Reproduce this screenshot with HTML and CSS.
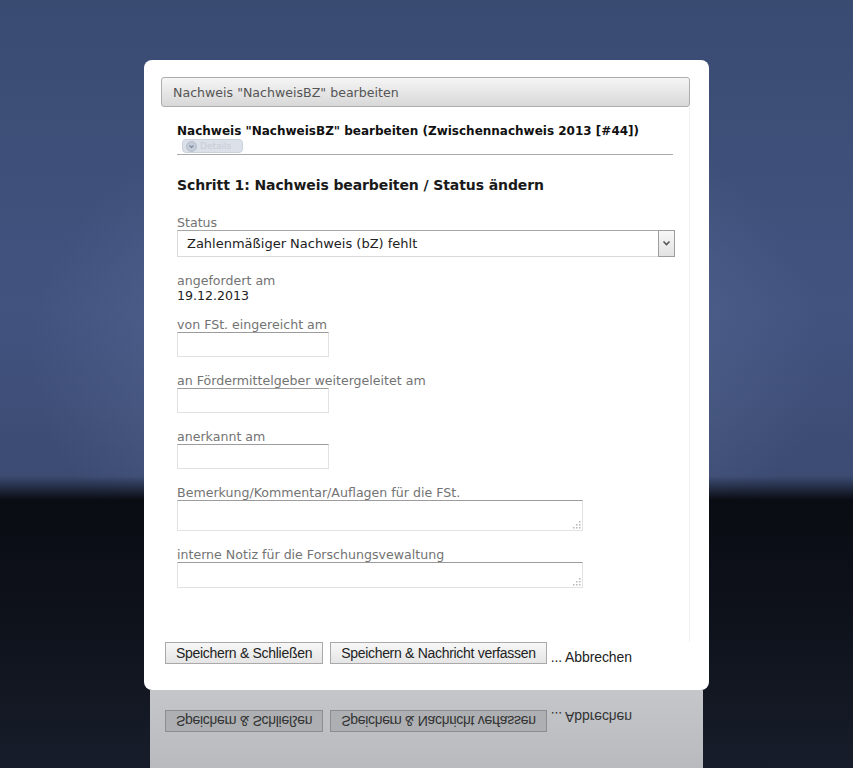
FILE: index.html
```html
<!DOCTYPE html>
<html lang="de">
<head>
  <meta charset="UTF-8" />
  <title>Nachweis bearbeiten</title>
  <meta name="viewport" content="width=device-width, initial-scale=1.0" />
  <link rel="stylesheet" href="styles.css">
</head>
<body>
  <div class="stage">
    <div class="dialog">
      <div class="bar">Nachweis "NachweisBZ" bearbeiten</div>

      <div class="panel">
        <h1>Nachweis "NachweisBZ" bearbeiten (Zwischennachweis 2013 [#44])</h1>
        <span class="details">
          <svg width="11" height="11" viewBox="0 0 11 11"><circle cx="5.5" cy="5.5" r="5" fill="#c4ccd8" stroke="#b4bdcb"/><path d="M3.5 4.5 L5.5 6.5 L7.5 4.5" fill="none" stroke="#7d8aa0" stroke-width="1.2"/></svg>
          Details
        </span>
        <hr />

        <h2>Schritt 1: Nachweis bearbeiten / Status ändern</h2>

        <div class="field first">
          <label>Status</label>
          <div class="select">
            <span>Zahlenmäßiger Nachweis (bZ) fehlt</span>
            <span class="arrow">
              <svg width="9" height="7" viewBox="0 0 9 7"><path d="M1.5 1.5 L4.5 4.5 L7.5 1.5" fill="none" stroke="#555" stroke-width="1.6"/></svg>
            </span>
          </div>
        </div>

        <div class="field">
          <label>angefordert am</label>
          <div class="value">19.12.2013</div>
        </div>

        <div class="field tight">
          <label>von FSt. eingereicht am</label>
          <input type="text" class="date" />
        </div>

        <div class="field">
          <label>an Fördermittelgeber weitergeleitet am</label>
          <input type="text" class="date" />
        </div>

        <div class="field">
          <label>anerkannt am</label>
          <input type="text" class="date" />
        </div>

        <div class="field">
          <label>Bemerkung/Kommentar/Auflagen für die FSt.</label>
          <div class="area">
            <textarea class="tall"></textarea>
            <svg class="grip" width="9" height="9" viewBox="0 0 9 9" fill="#b8b8b8"><rect x="7" y="1" width="1.5" height="1.5"/><rect x="4" y="4" width="1.5" height="1.5"/><rect x="7" y="4" width="1.5" height="1.5"/><rect x="1" y="7" width="1.5" height="1.5"/><rect x="4" y="7" width="1.5" height="1.5"/><rect x="7" y="7" width="1.5" height="1.5"/></svg>
          </div>
        </div>

        <div class="field">
          <label>interne Notiz für die Forschungsvewaltung</label>
          <div class="area">
            <textarea></textarea>
            <svg class="grip" width="9" height="9" viewBox="0 0 9 9" fill="#b8b8b8"><rect x="7" y="1" width="1.5" height="1.5"/><rect x="4" y="4" width="1.5" height="1.5"/><rect x="7" y="4" width="1.5" height="1.5"/><rect x="1" y="7" width="1.5" height="1.5"/><rect x="4" y="7" width="1.5" height="1.5"/><rect x="7" y="7" width="1.5" height="1.5"/></svg>
          </div>
        </div>
      </div>

      <div class="actions">
        <button>Speichern &amp; Schließen</button>
        <button>Speichern &amp; Nachricht verfassen</button>
        <a class="cancel">... Abbrechen</a>
      </div>
    </div>

    <div class="reflection">
      <div class="actions flipped">
        <button>Speichern &amp; Schließen</button>
        <button>Speichern &amp; Nachricht verfassen</button>
        <a class="cancel">... Abbrechen</a>
      </div>
    </div>
  </div>
</body>
</html>
```

FILE: styles.css
```css
html, body {
  margin: 0;
  height: 100%;
}
body {
  min-height: 768px;
  overflow: hidden;
  font-family: "DejaVu Sans", Verdana, sans-serif;
  background:
    linear-gradient(180deg, rgba(8,10,16,0) 476px, #0a0c13 500px, #0e121b 620px, #171d2a 768px),
    radial-gradient(ellipse 62% 48% at 50% 46%, rgba(118,136,178,0.55), rgba(118,136,178,0) 75%),
    linear-gradient(180deg, #3a4b72 0, #425380 40%, #3b4b72 62%);
}
.stage {
  width: 565px;
  margin: 0 auto;
  padding-top: 60px;
}
.dialog {
  background: #fff;
  border-radius: 8px;
  height: 630px;
  box-sizing: border-box;
  padding: 17px 19px 0 17px;
  display: flex;
  flex-direction: column;
}
.bar {
  height: 30px;
  box-sizing: border-box;
  border: 1px solid #adadad;
  border-radius: 3px;
  background: linear-gradient(#f5f5f5, #d8d8d8);
  color: #555;
  font-size: 12.6px;
  line-height: 30px;
  padding-left: 11px;
}
.panel {
  flex: 1;
  border-right: 1px solid #f0f0f0;
  padding: 16px 14px 0 16px;
}
h1 {
  margin: 0;
  font-size: 12px;
  line-height: 16px;
  color: #111;
}
.details {
  display: flex;
  align-items: center;
  gap: 3px;
  width: 61px;
  height: 14px;
  box-sizing: border-box;
  margin-left: 5px;
  padding-left: 3px;
  border: 1px solid #ccd2dc;
  border-radius: 4px;
  background: #dce1e9;
  color: #c6ccd6;
  font-size: 9px;
}
hr {
  width: 496px;
  margin: 1px 0 0;
  border: 0;
  border-top: 1px solid #a9a9a9;
}
h2 {
  margin: 21px 0 0;
  font-size: 14px;
  letter-spacing: -0.1px;
  line-height: 18px;
  color: #1a1a1a;
}
.field {
  margin-top: 17px;
}
.field.first {
  margin-top: 22px;
}
.field.tight {
  margin-top: 15px;
}
label {
  display: block;
  font-size: 12.6px;
  line-height: 14px;
  color: #737373;
}
.value {
  font-size: 12.6px;
  line-height: 15px;
  color: #222;
}
.select {
  position: relative;
  height: 27px;
  box-sizing: border-box;
  border: 1px solid #dadada;
  border-top-color: #a6a6a6;
  padding-left: 9px;
  font-size: 13px;
  line-height: 25px;
  color: #222;
}
.select .arrow {
  position: absolute;
  right: -1px;
  top: -1px;
  width: 17px;
  height: 27px;
  box-sizing: border-box;
  border: 1px solid #9d9d9d;
  background: linear-gradient(#f7f7f7, #e2e2e2);
  display: flex;
  align-items: center;
  justify-content: center;
}
input.date, textarea {
  display: block;
  margin: 0;
  padding: 0;
  box-sizing: border-box;
  border: 1px solid #e2e2e2;
  border-top-color: #9c9c9c;
  background: #fff;
  font: inherit;
  outline: none;
}
input.date {
  width: 152px;
  height: 25px;
}
.area {
  position: relative;
  width: 406px;
}
textarea {
  width: 406px;
  height: 26px;
  resize: none;
}
textarea.tall {
  height: 31px;
}
.grip {
  position: absolute;
  right: 2px;
  bottom: 2px;
}
.actions {
  display: flex;
  align-items: flex-start;
  gap: 7px;
  height: 48px;
  padding: 0 0 0 4px;
  font-family: "Liberation Sans", Arial, sans-serif;
}
button {
  height: 22px;
  padding: 0 10px;
  border: 1px solid #a9a9a9;
  background: linear-gradient(#f7f7f7, #e5e5e5);
  font-family: "Liberation Sans", Arial, sans-serif;
  font-size: 14px;
  letter-spacing: -0.3px;
  color: #222;
}
.cancel {
  margin: 7px 0 0 -3px;
  font-size: 14px;
  letter-spacing: -0.1px;
  color: #222;
}
.reflection {
  width: 553px;
  height: 80px;
  margin-left: 6px;
  padding: 16px 0 0 15px;
  box-sizing: border-box;
  background: linear-gradient(#c4c6ca, #b8babe);
}
.flipped {
  height: auto;
  padding-left: 0;
  padding-bottom: 3px;
  transform: scaleY(-1);
}
.flipped button {
  background: #adafb2;
  border-color: #8b8d90;
  color: #333;
}
.flipped .cancel {
  color: #333;
}
```
